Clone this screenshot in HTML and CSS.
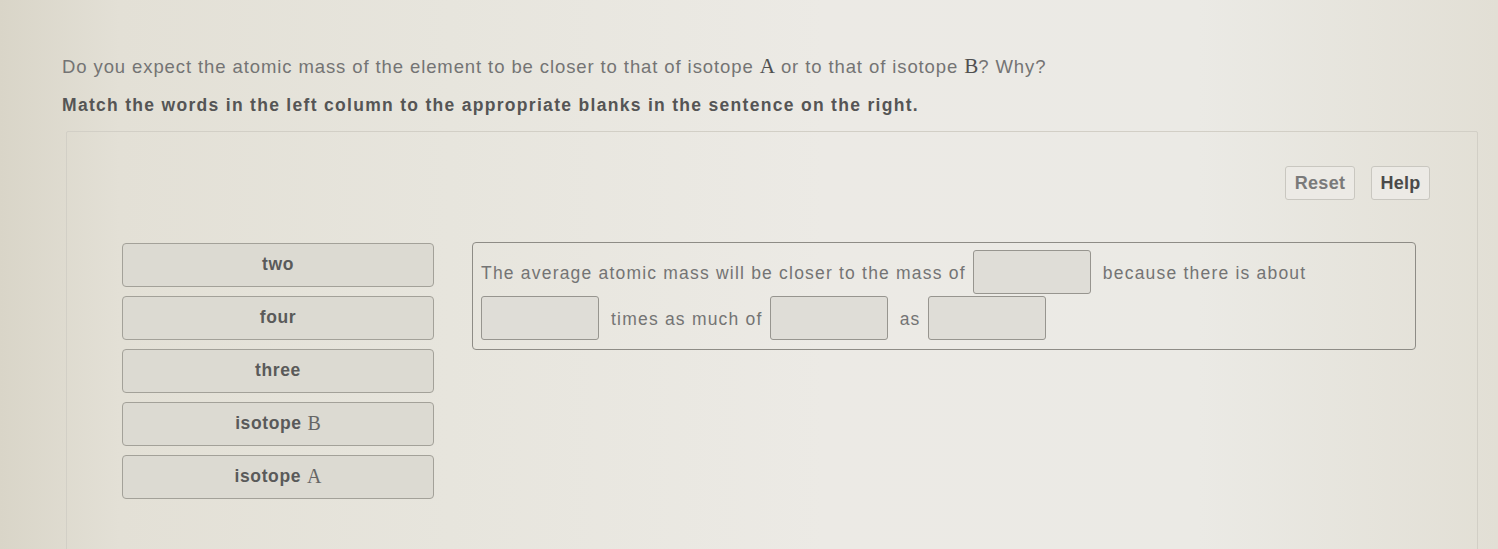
FILE: index.html
```html
<!DOCTYPE html>
<html>
<head>
<meta charset="utf-8">
<link rel="stylesheet" href="styles.css">
</head>
<body>
<div class="page">
  <p class="question">Do you expect the atomic mass of the element to be closer to that of isotope <span class="var">A</span> or to that of isotope <span class="var">B</span>? Why?</p>
  <p class="instruction">Match the words in the left column to the appropriate blanks in the sentence on the right.</p>
  <div class="panel">
    <div class="toolbar">
      <button class="btn btn-reset">Reset</button>
      <button class="btn btn-help">Help</button>
    </div>
    <div class="content">
      <div class="tiles">
        <div class="tile">two</div>
        <div class="tile">four</div>
        <div class="tile">three</div>
        <div class="tile">isotope <span class="var">B</span></div>
        <div class="tile">isotope <span class="var">A</span></div>
      </div>
      <div class="sentence">
        The average atomic mass will be closer to the mass of <span class="blank"></span> because there is about <span class="blank first"></span> times as much of <span class="blank"></span> as <span class="blank"></span>
      </div>
    </div>
  </div>
</div>
</body>
</html>
```
FILE: styles.css
```css
html, body {
  margin: 0;
  padding: 0;
}
body {
  width: 1498px;
  height: 549px;
  overflow: hidden;
  font-family: "Liberation Sans", Arial, sans-serif;
  background: linear-gradient(to right, #d9d5c8 0%, #e3e0d6 8%, #e7e5dd 30%, #eceae5 55%, #ebeae5 80%, #e2dfd5 100%);
  color: #6a6a6a;
}
.page {
  padding-top: 55px;
}
.question {
  margin: 0 0 0 62px;
  font-size: 18.5px;
  line-height: 22px;
  color: #747474;
  letter-spacing: 0.9px;
  white-space: nowrap;
}
.var {
  font-family: "Liberation Serif", "Times New Roman", serif;
  font-size: 1.14em;
  color: #505050;
  letter-spacing: 0;
}
.instruction {
  margin: 16px 0 0 62px;
  font-size: 17.5px;
  line-height: 22px;
  font-weight: bold;
  color: #555;
  letter-spacing: 1.3px;
  white-space: nowrap;
}
.panel {
  margin: 15px 0 0 66px;
  width: 1412px;
  height: 440px;
  border: 1px solid #d2cfc6;
  border-radius: 2px;
  box-sizing: border-box;
  padding: 34px 47px 0 55px;
}
.toolbar {
  display: flex;
  justify-content: flex-end;
  gap: 16px;
}
.btn {
  height: 34px;
  padding: 0;
  border: 1px solid #c9c7c0;
  border-radius: 3px;
  background: #eceae5;
  font-family: "Liberation Sans", Arial, sans-serif;
  font-size: 18px;
  font-weight: bold;
  color: #555;
  letter-spacing: 0.3px;
}
.btn-reset {
  width: 70px;
  color: #7a7a7a;
}
.btn-help {
  width: 59px;
  color: #4a4a4a;
}
.content {
  display: flex;
  align-items: flex-start;
  margin-top: 42px;
  gap: 38px;
}
.tiles {
  display: flex;
  flex-direction: column;
  gap: 9px;
  width: 312px;
  padding-top: 1px;
}
.tile {
  height: 44px;
  box-sizing: border-box;
  border: 1.5px solid #a3a199;
  border-radius: 4px;
  background: #dcdad2;
  display: flex;
  align-items: center;
  justify-content: center;
  font-size: 17.5px;
  font-weight: bold;
  color: #5a5a5a;
  letter-spacing: 0.6px;
  padding-bottom: 2px;
}
.tile .var {
  font-weight: normal;
  margin-left: 6px;
  color: #666;
}
.sentence {
  width: 944px;
  height: 108px;
  box-sizing: border-box;
  border: 1.5px solid #8e8c86;
  border-radius: 4px;
  padding: 7px 8px;
  font-size: 17.5px;
  line-height: 46px;
  color: #747474;
  letter-spacing: 1.2px;
}
.blank {
  display: inline-block;
  width: 118px;
  height: 44px;
  box-sizing: border-box;
  border: 1.5px solid #97958f;
  border-radius: 3px;
  background: #dfddd7;
  vertical-align: middle;
  margin: -4px 6px 0 1px;
}
.blank.first {
  margin-left: 0;
}
```
